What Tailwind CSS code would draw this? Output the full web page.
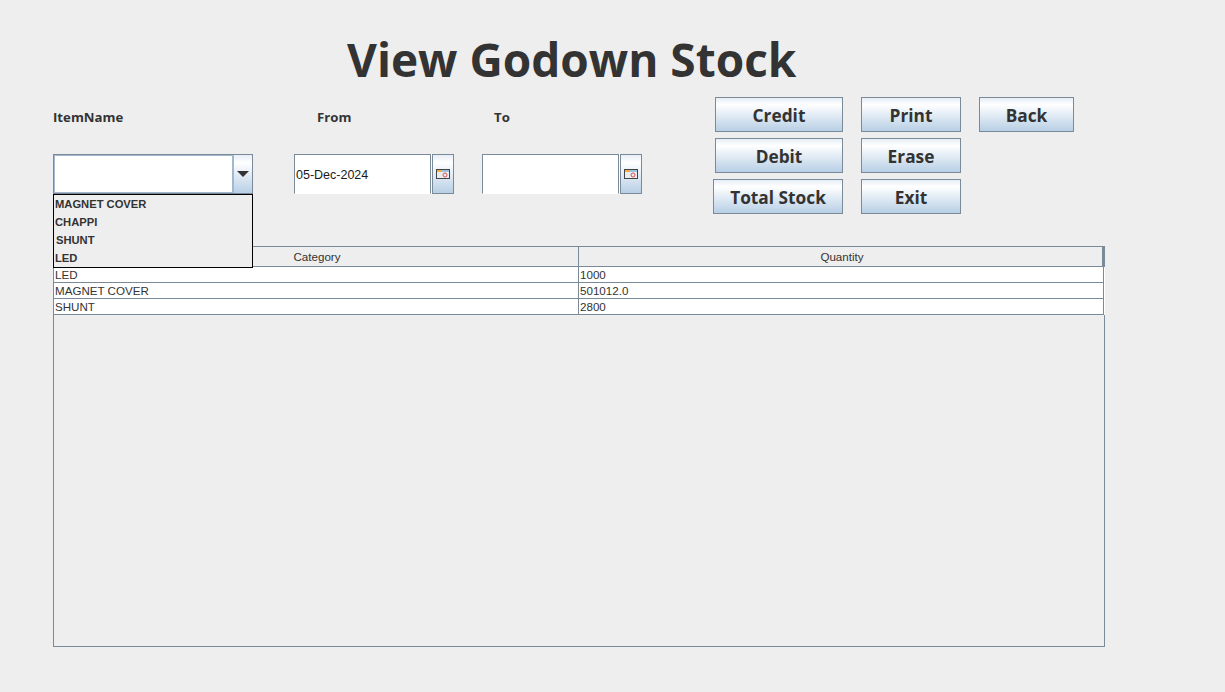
<!DOCTYPE html>
<html>
<head>
<meta charset="utf-8">
<script src="https://cdn.jsdelivr.net/npm/@tailwindcss/browser@4"></script>
</head>
<body class="m-0 bg-[#eeeeee]">
<div class="w-[1225px] h-[692px] bg-[#eeeeee] overflow-hidden font-['Liberation_Sans',sans-serif] text-[#333333]">
  <div class="h-[97px] pl-[347px] pt-[29px]">
    <h1 class="font-['Open_Sans',sans-serif] font-bold text-[46px] leading-[60px] whitespace-nowrap">View Godown Stock</h1>
  </div>
  <div class="flex pl-[53px] h-[117px]">
    <div class="w-[660px] relative">
      <div class="flex h-[57px] pt-[10px] font-['Open_Sans',sans-serif] font-bold text-[13.2px] leading-[20px]">
        <span class="w-[264px]">ItemName</span>
        <span class="w-[177px]">From</span>
        <span>To</span>
      </div>
      <div class="flex h-[40px]">
        <div class="relative flex w-[200px] h-[40px] border border-[#7a8a99]">
          <div class="w-[180px] bg-white border border-[#a3b8cc] border-r-2"></div>
          <div class="flex-1 flex items-center justify-center bg-gradient-to-b from-[#e6eef6] via-white via-[20%] to-[#b8cfe5]">
            <svg width="12" height="6" viewBox="0 0 12 6"><path d="M0 0H12L6 6Z" fill="#333333"/></svg>
          </div>
          <ul class="absolute z-10 left-[-1px] top-[39px] w-[200px] h-[74px] border border-black bg-[#eeeeee] font-bold text-[11.2px] leading-[18px] pl-[1px]">
            <li>MAGNET COVER</li>
            <li>CHAPPI</li>
            <li class="pl-[1px]">SHUNT</li>
            <li>LED</li>
          </ul>
        </div>
        <div class="ml-[41px] w-[137px] h-[40px] bg-white border-l border-t border-r border-[#7a8a99] border-b border-b-white shadow-[1px_0_0_#ffffff] text-[12.5px] text-[#1a1a1a] leading-[40px] pl-[1px]">05-Dec-2024</div>
        <div class="ml-[1px] w-[22px] h-[40px] flex items-center justify-center border border-[#7a8a99] bg-gradient-to-b from-[#e6eef6] via-white via-[20%] to-[#b8cfe5]">
          <svg width="14" height="10" viewBox="0 0 14 10"><rect x="0.5" y="0.5" width="13" height="9" fill="#e8edf2" stroke="#444444"/><rect x="1" y="1" width="5" height="2" fill="#f0b040"/><rect x="6" y="1" width="7" height="2" fill="#9cc0e0"/><circle cx="9" cy="6" r="2" fill="none" stroke="#e05050" stroke-width="1"/></svg>
        </div>
        <div class="ml-[28px] w-[137px] h-[40px] bg-white border-l border-t border-r border-[#7a8a99] border-b border-b-white shadow-[1px_0_0_#ffffff]"></div>
        <div class="ml-[1px] w-[22px] h-[40px] flex items-center justify-center border border-[#7a8a99] bg-gradient-to-b from-[#e6eef6] via-white via-[20%] to-[#b8cfe5]">
          <svg width="14" height="10" viewBox="0 0 14 10"><rect x="0.5" y="0.5" width="13" height="9" fill="#e8edf2" stroke="#444444"/><rect x="1" y="1" width="5" height="2" fill="#f0b040"/><rect x="6" y="1" width="7" height="2" fill="#9cc0e0"/><circle cx="9" cy="6" r="2" fill="none" stroke="#e05050" stroke-width="1"/></svg>
        </div>
      </div>
    </div>
    <div class="flex flex-col items-end gap-[6px] w-[130px] font-['Open_Sans',sans-serif] font-bold text-[17.3px]">
      <button class="w-[128px] h-[35px] pt-[2px] border border-[#7a8a99] bg-gradient-to-b from-[#e6eef6] via-white via-[20%] to-[#b8cfe5]">Credit</button>
      <button class="w-[128px] h-[35px] pt-[2px] border border-[#7a8a99] bg-gradient-to-b from-[#e6eef6] via-white via-[20%] to-[#b8cfe5]">Debit</button>
      <button class="w-[130px] h-[35px] pt-[2px] border border-[#7a8a99] bg-gradient-to-b from-[#e6eef6] via-white via-[20%] to-[#b8cfe5]">Total Stock</button>
    </div>
    <div class="ml-[18px] flex flex-col gap-[6px] w-[100px] font-['Open_Sans',sans-serif] font-bold text-[17.3px]">
      <button class="h-[35px] pt-[2px] border border-[#7a8a99] bg-gradient-to-b from-[#e6eef6] via-white via-[20%] to-[#b8cfe5]">Print</button>
      <button class="h-[35px] pt-[2px] border border-[#7a8a99] bg-gradient-to-b from-[#e6eef6] via-white via-[20%] to-[#b8cfe5]">Erase</button>
      <button class="h-[35px] pt-[2px] border border-[#7a8a99] bg-gradient-to-b from-[#e6eef6] via-white via-[20%] to-[#b8cfe5]">Exit</button>
    </div>
    <div class="ml-[18px] w-[95px] font-['Open_Sans',sans-serif] font-bold text-[17.3px]">
      <button class="w-full h-[35px] pt-[2px] border border-[#7a8a99] bg-gradient-to-b from-[#e6eef6] via-white via-[20%] to-[#b8cfe5]">Back</button>
    </div>
  </div>
  <div class="ml-[53px] mt-[32px] w-[1052px] h-[401px] border border-[#7a8a99] text-[11.6px]">
    <div class="w-[1050px]">
      <div class="grid grid-cols-[525px_1fr] h-[20px] border-b border-r-2 border-[#7a8a99] leading-[20px] text-center">
        <div class="border-r border-[#7a8a99] pl-[2px]">Category</div>
        <div class="pl-[3px]">Quantity</div>
      </div>
      <div class="grid grid-cols-[525px_1fr] h-[16px] bg-white border-b border-r border-[#7a8a99] shadow-[1px_0_0_#ffffff] leading-[15px]">
        <div class="border-r border-[#7a8a99] pl-[1px]">LED</div>
        <div class="pl-[1px]">1000</div>
      </div>
      <div class="grid grid-cols-[525px_1fr] h-[16px] bg-white border-b border-r border-[#7a8a99] shadow-[1px_0_0_#ffffff] leading-[15px]">
        <div class="border-r border-[#7a8a99] pl-[1px]">MAGNET COVER</div>
        <div class="pl-[1px]">501012.0</div>
      </div>
      <div class="grid grid-cols-[525px_1fr] h-[16px] bg-white border-b border-r border-[#7a8a99] shadow-[1px_0_0_#ffffff] leading-[15px]">
        <div class="border-r border-[#7a8a99] pl-[1px]">SHUNT</div>
        <div class="pl-[1px]">2800</div>
      </div>
    </div>
  </div>
</div>
</body>
</html>
